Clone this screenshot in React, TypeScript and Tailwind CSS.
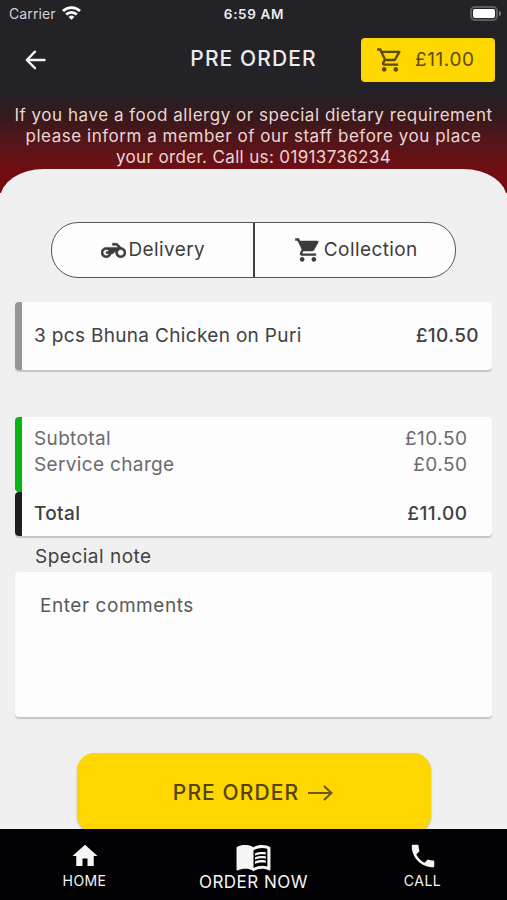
import type { ReactNode } from "react";
import {
  MdHome,
  MdMenuBook,
  MdOutlineShoppingCart,
  MdPhone,
  MdShoppingCart,
} from "react-icons/md";

function Motorcycle() {
  return (
    <svg width="25" height="25" viewBox="0 0 24 24" fill="currentColor" stroke="currentColor" strokeWidth="0.5">
      <path d="M19.44 9.03L15.41 5H11v2h3.59l2 2H5c-2.8 0-5 2.2-5 5s2.2 5 5 5c2.46 0 4.45-1.69 4.9-4h1.65l2.77-2.77c-.21.54-.32 1.14-.32 1.77 0 2.8 2.2 5 5 5s5-2.2 5-5c0-2.65-1.97-4.77-4.56-4.97zM7.82 15C7.4 16.15 6.28 17 5 17c-1.63 0-3-1.37-3-3s1.37-3 3-3c1.28 0 2.4.85 2.82 2H5v2h2.82zM19 17c-1.66 0-3-1.34-3-3s1.34-3 3-3 3 1.34 3 3-1.34 3-3 3z" />
    </svg>
  );
}

function StatusBar() {
  return (
    <div className="grid h-7 grid-cols-3 items-center font-['Inter',sans-serif]">
      <div className="flex items-center gap-[6px] pb-[2px] pl-[9px] text-[14px] tracking-[0.1px] text-[#d2d1d3]">
        <span>Carrier</span>
        <svg width="19" height="14" viewBox="0 0 19 14" fill="none" stroke="#fff" strokeWidth="2.8">
          <path d="M1 5.1a12.2 12.2 0 0 1 17 0" />
          <path d="M4.2 8.5a7.6 7.6 0 0 1 10.6 0" />
          <path d="M9.5 13.8 6.6 10.9a4.2 4.2 0 0 1 5.8 0Z" fill="#fff" stroke="none" />
        </svg>
      </div>
      <div className="pl-px text-center text-[13.5px] font-semibold tracking-[0.65px] text-[#ededee]">6:59 AM</div>
      <div className="flex items-center justify-end pr-[6px] pb-[2px]">
        <div className="h-[15px] w-[28px] rounded-[5px] border-2 border-[#5d5c60] p-px">
          <div className="h-full w-full rounded-[2px] bg-white" />
        </div>
        <div className="ml-px h-[5px] w-[2px] rounded-r bg-[#77767a]" />
      </div>
    </div>
  );
}

function Header() {
  return (
    <div className="grid h-[64px] grid-cols-[160px_1fr_160px] items-center">
      <svg className="ml-[25px]" width="22" height="20" viewBox="0 0 22 20" fill="none" stroke="#f4f4f4" strokeWidth="2.4" strokeLinecap="round" strokeLinejoin="round">
        <path d="M19.5 10H2.2M10 1.7 1.8 10l8.2 8.2" />
      </svg>
      <h1 className="pb-[2px] text-center text-[21px] font-medium tracking-[1.1px] whitespace-nowrap text-[#ececec]">PRE ORDER</h1>
      <button className="mr-3 ml-[14px] flex h-[44px] items-center rounded-[4px] bg-[#fed700] pl-[15px] text-[#5c4a10]">
        <MdOutlineShoppingCart size={28} />
        <span className="ml-[11px] text-[19px] tracking-[0.6px]">£11.00</span>
      </button>
    </div>
  );
}

function Option({ icon, label }: { icon: ReactNode; label: string }) {
  return (
    <button className="flex flex-1 items-center justify-center gap-[2px] pl-[2px] text-[19px] tracking-[0.4px] text-[#3c3c3e]">
      {icon}
      <span className="pt-px">{label}</span>
    </button>
  );
}

function Line({ label, price }: { label: string; price: string }) {
  return (
    <div className="flex h-[26px] items-center justify-between">
      <span className="tracking-[0.35px]">{label}</span>
      <span className="-mr-[0.5px] tracking-[0.5px]">{price}</span>
    </div>
  );
}

export default function App() {
  return (
    <div className="flex h-[900px] w-[507px] flex-col overflow-hidden bg-[#f0f0f0] font-['Inter','Liberation_Sans',sans-serif] text-[#414143]">
      <header className="h-[193px] shrink-0 bg-[linear-gradient(to_bottom,#232226_0px,#232226_92px,#34191c_115px,#4d171b_135px,#6c1015_165px,#7b090b_193px)]">
        <StatusBar />
        <Header />
        <p className="pt-[13px] text-center text-[17px] leading-[21px] tracking-[0.53px] text-[#ead5d5]">
          If you have a food allergy or special dietary requirement
          <br />
          please inform a member of our staff before you place
          <br />
          <span className="tracking-[0.35px]">your order. Call us: 01913736234</span>
        </p>
      </header>

      <main className="-mt-[24px] flex h-[660px] shrink-0 flex-col overflow-hidden rounded-t-[44px_30px] bg-[#f0f0f0] px-[15px] pt-[53px]">
        <div className="mx-[36px] flex h-[56px] shrink-0 rounded-[27px] border border-[#555] bg-[#fdfdfd]">
          <Option icon={<Motorcycle />} label="Delivery" />
          <div className="w-[2px] bg-[#414141]" />
          <Option icon={<MdShoppingCart size={28} />} label="Collection" />
        </div>

        <section className="mt-[24px] flex h-[68px] shrink-0 items-center justify-between overflow-hidden rounded-[4px] border-l-[7px] border-[#969696] bg-[#fdfdfd] pr-[13px] pl-3 text-[19px] shadow-[0_2px_1px_#c5c5c5]">
          <span className="tracking-[0.33px]">3 pcs Bhuna Chicken on Puri</span>
          <span className="font-medium tracking-[0.4px]">£10.50</span>
        </section>

        <section className="mt-[47px] shrink-0 rounded-[4px] bg-[#fdfdfd] text-[19px] shadow-[0_2px_1px_#c5c5c5]">
          <div className="h-[75px] rounded-l-[4px] border-l-[7px] border-[#0ab414] pt-[9px] pr-[25px] pl-3 text-[#6b6b6d]">
            <Line label="Subtotal" price="£10.50" />
            <Line label="Service charge" price="£0.50" />
          </div>
          <div className="h-[44px] rounded-l-[4px] border-l-[7px] border-[#1e1e22] pt-[9px] pr-[25px] pl-3 font-medium">
            <Line label="Total" price="£11.00" />
          </div>
        </section>

        <label className="mt-[9px] ml-5 text-[19px] leading-[24px] tracking-[0.5px]">Special note</label>
        <div className="mt-[3px] h-[145px] shrink-0 rounded-[4px] bg-[#fdfdfd] px-[25px] pt-[22px] text-[19px] leading-[24px] tracking-[0.55px] text-[#59595b] shadow-[0_2px_1px_#c5c5c5]">
          Enter comments
        </div>

        <button className="mx-auto mt-[36px] flex h-[80px] w-[354px] shrink-0 items-center justify-center gap-[9px] rounded-[18px] bg-[#fed700] pr-px text-[21px] font-medium text-[#54430f] shadow-[0_1px_2px_#aaa]">
          <span className="tracking-[1.1px]">PRE ORDER</span>
          <svg width="25" height="16" viewBox="0 0 25 16" fill="none" stroke="#665b24" strokeWidth="2">
            <path d="M0 8h23M16 1l7.5 7L16 15" />
          </svg>
        </button>
      </main>

      <nav className="grid h-[71px] shrink-0 grid-cols-3 bg-[#020104] text-[#f5f5f5]">
        <a className="flex flex-col items-center pt-[12px] text-[14px] leading-[20px]">
          <MdHome size={30} />
          <span className="tracking-[0.4px]">HOME</span>
        </a>
        <a className="flex flex-col items-center pt-[9px] text-[17px] leading-[20px]">
          <MdMenuBook size={37} />
          <span className="-mt-[3px] tracking-[0.5px]">ORDER NOW</span>
        </a>
        <a className="flex flex-col items-center pt-[12px] text-[14px] leading-[20px]">
          <MdPhone size={30} />
          <span className="tracking-[0.5px]">CALL</span>
        </a>
      </nav>
    </div>
  );
}
